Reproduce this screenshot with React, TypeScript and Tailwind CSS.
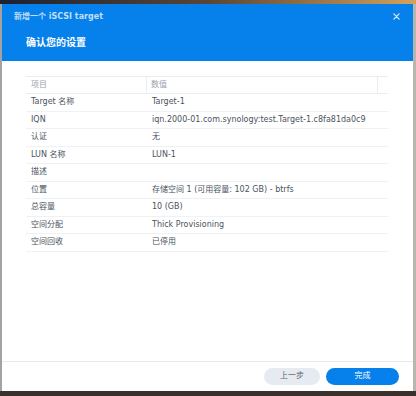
import React from "react";

type Row = { label: string; value: string };

const rows: Row[] = [
  { label: "Target 名称", value: "Target-1" },
  { label: "IQN", value: "iqn.2000-01.com.synology:test.Target-1.c8fa81da0c9" },
  { label: "认证", value: "无" },
  { label: "LUN 名称", value: "LUN-1" },
  { label: "描述", value: "" },
  { label: "位置", value: "存储空间 1 (可用容量: 102 GB) - btrfs" },
  { label: "总容量", value: "10 (GB)" },
  { label: "空间分配", value: "Thick Provisioning" },
  { label: "空间回收", value: "已停用" },
];

const font = "font-['DejaVu_Sans','Noto_Sans_CJK_SC',sans-serif]";

export default function App() {
  return (
    <div
      className={`w-[416px] h-[396px] flex flex-col bg-linear-to-r from-[#1c2130] via-[#5a4634] to-[#d6a25a] ${font}`}
    >
      <div className="h-[4px] shrink-0" />
      <div className="flex flex-1 min-h-0">
        <div className="w-[2px] bg-[#a3a3a3]" />
        {/* dialog */}
        <div className="w-[411px] flex flex-col bg-white">
          <div className="h-[57px] bg-[#0680ea] flex flex-col">
            <div className="h-[24px] flex items-center justify-between pl-[12px] pr-[13px]">
              <span className="text-[8px] font-bold text-white/75 leading-none pt-[1px]">
                新增一个 iSCSI target
              </span>
              <svg width="7" height="7" viewBox="0 0 8 8" className="text-white/85">
                <path d="M1 1L7 7M7 1L1 7" stroke="currentColor" strokeWidth="1.4" strokeLinecap="round" />
              </svg>
            </div>
            <div className="pl-[24px] pt-[10px] text-[10px] font-bold text-white leading-none">
              确认您的设置
            </div>
          </div>

          <div className="flex-1 pt-[15px] pl-[24px] pr-[25px]">
            <div className="text-[8px] leading-none">
              <div className="h-[18px] flex border-t border-b border-[#e9edf2] text-[#9aa3ad]">
                <div className="w-[121px] flex items-center pl-[5px] border-r border-[#e9edf2]">项目</div>
                <div className="w-[231px] flex items-center pl-[4px] border-r border-[#e9edf2]">数值</div>
                <div className="flex-1" />
              </div>
              {rows.map((r) => (
                <div key={r.label} className="h-[17.5px] flex border-b border-[#eef1f5] text-[#4a535d]">
                  <div className="w-[121px] flex items-center pl-[5px]">{r.label}</div>
                  <div className="flex-1 flex items-center pl-[5px] whitespace-nowrap">{r.value}</div>
                </div>
              ))}
            </div>
          </div>

          <div className="h-[30px] border-t border-[#e6e9ef] flex items-center justify-end gap-[6px] pr-[14px] pb-[1px]">
            <button className="w-[56px] h-[17px] rounded-full bg-[#e6ebf2] text-[8px] text-[#54606e] leading-none">
              上一步
            </button>
            <button className="w-[73px] h-[17px] rounded-full bg-[#0680ea] text-[8px] text-white leading-none">
              完成
            </button>
          </div>
        </div>
        <div className="flex-1 bg-[#b9b6b0]" />
      </div>
      <div className="h-[5px] shrink-0 bg-[#3b302c]" />
    </div>
  );
}
